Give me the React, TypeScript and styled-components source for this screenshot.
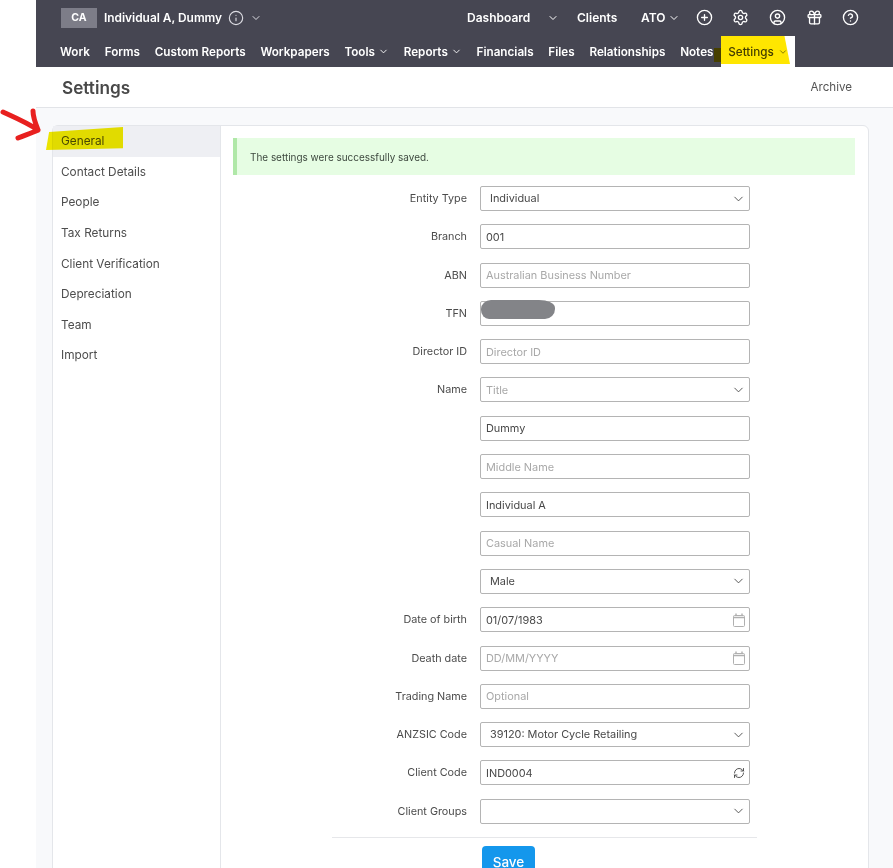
import React from 'react';
import styled, { createGlobalStyle } from 'styled-components';
import { ChevronDown, Info, CirclePlus, Settings as Gear, CircleUser, Gift, CircleHelp, RefreshCw } from 'lucide-react';

const Global = createGlobalStyle`
  html, body { margin: 0; padding: 0; height: 868px; overflow: hidden; background: #fff; }
  body { font-family: Inter, "Noto Sans", sans-serif; color: #444; }
  * { box-sizing: border-box; }
`;
const Page = styled.div`position: relative; width: 893px; height: 868px; padding-left: 36px; overflow: hidden; background: #fff;`;
const Header = styled.header`background: #464652; height: 67px; color: #fff;`;
const TopRow = styled.div`display: flex; align-items: center; height: 35px; padding-left: 25px;`;
const Avatar = styled.div`width: 36px; height: 20px; background: #7d7d88; font-size: 10.5px; font-weight: 700; display: flex; align-items: center; justify-content: center;`;
const ClientName = styled.span`margin-left: 7px; font-size: 11.9px; font-weight: 600; white-space: nowrap;`;
const InfoWrap = styled.span`display: flex; margin-left: 6px; color: #dcdce2;`;
const Right = styled.div`margin-left: auto; display: flex; align-items: center; padding-right: 24px; font-size: 12px; font-weight: 600;`;
const TopLink = styled.span<{ $w: number }>`width: ${p => p.$w}px; white-space: nowrap; display: flex; align-items: center; gap: 3px;`;
const TopIcon = styled.span`width: 36.6px; display: flex; justify-content: center;`;
const NavRow = styled.nav`display: flex; align-items: center; height: 31px; margin-top: 1px; padding-left: 24px; font-size: 11.7px; font-weight: 600; gap: 14.75px;`;
const NavItem = styled.span`display: inline-flex; align-items: center; gap: 3px; white-space: nowrap; height: 31px;`;
const ActiveNav = styled(NavItem)`background: #fff; color: #444; font-weight: 500; width: 74px; margin-left: -7px; padding-left: 7px; gap: 4px;`;
const TitleBar = styled.div`display: flex; align-items: center; justify-content: space-between; height: 41px; padding: 0 41px 0 26px; border-bottom: 1px solid #e2e4e8; background: #fff;`;
const Title = styled.h1`margin: 0; font-size: 17.2px; font-weight: 600; color: #484848;`;
const Archive = styled.span`font-size: 11.6px; color: #555;`;
const Body = styled.div`background: #f8f9fb; height: 800px; padding: 17px 24px 0 16px;`;
const Card = styled.div`display: flex; height: 900px; background: #fff; border: 1px solid #e4e6ea; border-radius: 6px;`;
const Side = styled.aside`width: 168px; border-right: 1px solid #e4e6ea; flex: none;`;
const SideItem = styled.div<{ $active?: boolean }>`height: 30.6px; padding-left: 8px; display: flex; align-items: center; font-size: 11.8px; color: #4d4d4d; background: ${p => p.$active ? '#eeeff3' : 'transparent'};`;
const Main = styled.main`flex: 1; padding: 12px 13px 0 12px;`;
const Alert = styled.div`height: 37px; background: #e6fde3; border-left: 4px solid #b0e8a8; padding: 1px 0 0 13px; display: flex; align-items: center; font-size: 9.95px; color: #3f4a40;`;
const Form = styled.form`width: 426px; margin: 11px 0 0 98px;`;
const Rows = styled.div`display: flex; flex-direction: column; gap: 13.3px;`;
const Row = styled.div`display: grid; grid-template-columns: 136px 270px; column-gap: 13px; height: 25px; align-items: center;`;
const Label = styled.label`text-align: right; font-size: 10.8px; color: #4b4b4b; white-space: nowrap;`;
const Field = styled.div`position: relative; height: 25px;`;
const Input = styled.input<{ $select?: boolean }>`
  width: 100%; height: 25px; border: 1px solid #b4b4b4; border-radius: 2px; outline: none; background: #fff;
  padding: 0 0 ${p => p.$select ? 1 : 0}px ${p => p.$select ? 9 : 5}px; font: 400 10.9px Inter, sans-serif; color: #484848;
  &::placeholder { color: #a8a8a8; opacity: 1; }
`;
const Trail = styled.span`position: absolute; right: 4px; top: 5px; display: flex; color: #444; width: 15px; height: 15px; justify-content: center; align-items: center;`;
const CalTrail = styled(Trail)`color: #b0b0b0;`;
const Divider = styled.hr`margin: 13px 0 8px 1px; border: 0; border-top: 1px solid #e6e7ea; width: 425px;`;
const SaveRow = styled.div`padding-left: 151px;`;
const Save = styled.button`width: 53px; height: 36px; padding: 0 0 3px; border: 0; border-radius: 4px; background: #1497ec; color: #fff; font: 500 13.5px Inter, sans-serif;`;
const Mark = styled.div`position: absolute; mix-blend-mode: multiply; pointer-events: none;`;
const GeneralMark = styled(Mark)`left: 46px; top: 127px; width: 77px; height: 23px; background: #f2ea00; clip-path: polygon(4% 22%, 100% 0, 100% 92%, 0 100%);`;
const SettingsMark = styled(Mark)`left: 721px; top: 36px; width: 69px; height: 28px; background: #ffe600; clip-path: polygon(0 0, 92% 0, 100% 100%, 0 100%);`;
const SettingsTab = styled(Mark)`left: 714px; top: 48px; width: 7px; height: 14px; background: #ffe600;`;
const Redact = styled.div`position: absolute; left: 481px; top: 300px; width: 74px; height: 19px; background: #838488; border-radius: 10px 16px 10px 8px / 9px 8px 10px 9px;`;
const ArrowSvg = styled.svg`position: absolute; left: 0; top: 105px;`;

type F = { label?: string; value?: string; placeholder?: string; kind?: 'select' | 'date' | 'sync' };
const fields: F[] = [
  { label: 'Entity Type', value: 'Individual', kind: 'select' },
  { label: 'Branch', value: '001' },
  { label: 'ABN', placeholder: 'Australian Business Number' },
  { label: 'TFN' },
  { label: 'Director ID', placeholder: 'Director ID' },
  { label: 'Name', placeholder: 'Title', kind: 'select' },
  { value: 'Dummy' },
  { placeholder: 'Middle Name' },
  { value: 'Individual A' },
  { placeholder: 'Casual Name' },
  { value: 'Male', kind: 'select' },
  { label: 'Date of birth', value: '01/07/1983', kind: 'date' },
  { label: 'Death date', placeholder: 'DD/MM/YYYY', kind: 'date' },
  { label: 'Trading Name', placeholder: 'Optional' },
  { label: 'ANZSIC Code', value: '39120: Motor Cycle Retailing', kind: 'select' },
  { label: 'Client Code', value: 'IND0004', kind: 'sync' },
  { label: 'Client Groups', kind: 'select' },
];
const side = ['General', 'Contact Details', 'People', 'Tax Returns', 'Client Verification', 'Depreciation', 'Team', 'Import'];
const Chev = ({ s = 12 }: { s?: number }) => <ChevronDown size={s} strokeWidth={2} />;
const CalendarIcon = () => (
  <svg width="12" height="14" viewBox="0 0 12 14" fill="none" stroke="currentColor" aria-hidden="true">
    <rect x=".5" y="2.5" width="11" height="11" rx="1" />
    <path d="M.5 4.5h11M3 .5v2M9 .5v2" strokeWidth="1.4" />
  </svg>
);

export default function App() {
  return (
    <Page>
      <Global />
      <Header>
        <TopRow>
          <Avatar>CA</Avatar>
          <ClientName>Individual A, Dummy</ClientName>
          <InfoWrap><Info size={16} strokeWidth={1.7} /></InfoWrap>
          <InfoWrap><Chev /></InfoWrap>
          <Right>
            <TopLink $w={80}>Dashboard</TopLink>
            <TopLink $w={30}><Chev /></TopLink>
            <TopLink $w={64}>Clients</TopLink>
            <TopLink $w={45}>ATO <Chev /></TopLink>
            <TopIcon><CirclePlus size={17} strokeWidth={1.9} /></TopIcon>
            <TopIcon><Gear size={17} strokeWidth={1.9} /></TopIcon>
            <TopIcon><CircleUser size={17} strokeWidth={1.9} /></TopIcon>
            <TopIcon><Gift size={17} strokeWidth={1.9} /></TopIcon>
            <TopIcon><CircleHelp size={17} strokeWidth={1.9} /></TopIcon>
          </Right>
        </TopRow>
        <NavRow>
          <NavItem>Work</NavItem>
          <NavItem>Forms</NavItem>
          <NavItem>Custom Reports</NavItem>
          <NavItem>Workpapers</NavItem>
          <NavItem>Tools <Chev s={11} /></NavItem>
          <NavItem>Reports <Chev s={11} /></NavItem>
          <NavItem>Financials</NavItem>
          <NavItem>Files</NavItem>
          <NavItem>Relationships</NavItem>
          <NavItem>Notes</NavItem>
          <ActiveNav>Settings <ChevronDown size={10} strokeWidth={1.5} /></ActiveNav>
        </NavRow>
      </Header>
      <TitleBar>
        <Title>Settings</Title>
        <Archive>Archive</Archive>
      </TitleBar>
      <Body>
        <Card>
          <Side>
            {side.map((s, i) => <SideItem key={s} $active={i === 0}>{s}</SideItem>)}
          </Side>
          <Main>
            <Alert>The settings were successfully saved.</Alert>
            <Form>
              <Rows>
                {fields.map((f, i) => (
                  <Row key={i}>
                    <Label>{f.label}</Label>
                    <Field>
                      <Input readOnly $select={f.kind === 'select' && !f.placeholder} defaultValue={f.value} placeholder={f.placeholder} />
                      {f.kind === 'select' && <Trail><ChevronDown size={16} strokeWidth={1.4} /></Trail>}
                      {f.kind === 'date' && <CalTrail><CalendarIcon /></CalTrail>}
                      {f.kind === 'sync' && <Trail><RefreshCw size={12} strokeWidth={1.8} /></Trail>}
                    </Field>
                  </Row>
                ))}
              </Rows>
              <Divider />
              <SaveRow><Save type="button">Save</Save></SaveRow>
            </Form>
          </Main>
        </Card>
      </Body>
      <GeneralMark />
      <SettingsTab />
      <SettingsMark />
      <Redact />
      <ArrowSvg width="44" height="40" viewBox="0 0 44 40" aria-hidden="true">
        <path d="M3 7 C14 12 28 18 38 25 M33 6 C33 12 36 20 38 25 C32 28 25 30 18 33" fill="none" stroke="#e8201f" strokeWidth="5" strokeLinecap="round" strokeLinejoin="round" />
      </ArrowSvg>
    </Page>
  );
}
